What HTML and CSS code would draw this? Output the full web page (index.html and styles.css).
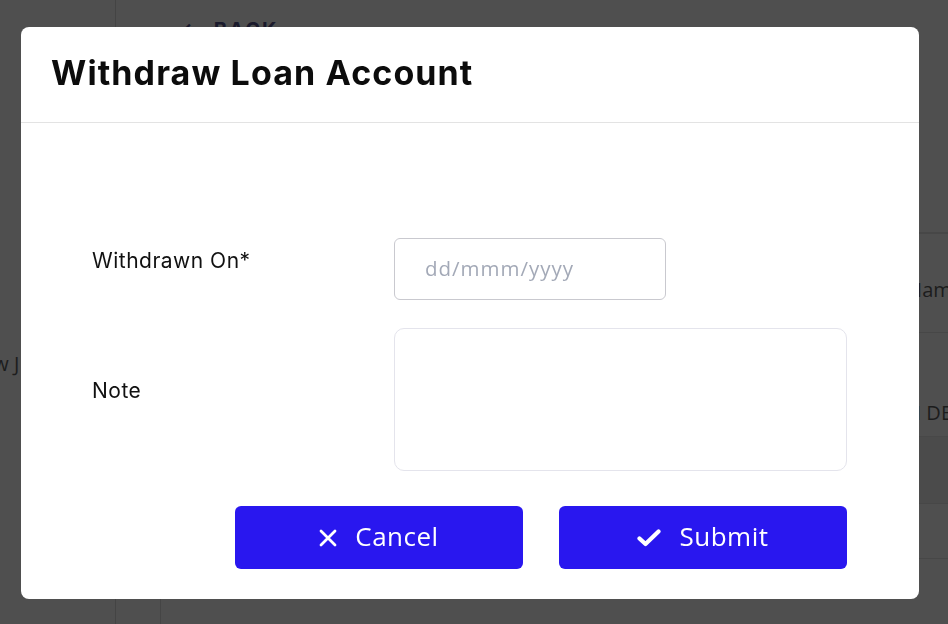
FILE: index.html
```html
<!DOCTYPE html>
<html lang="en">
<head>
<meta charset="utf-8">
<title>Withdraw Loan Account</title>
<link rel="stylesheet" href="styles.css">
</head>
<body>
<div class="page">
  <aside class="sidebar">
    <div class="side-item">New J</div>
  </aside>
  <main class="main">
    <div class="back"><span class="arrow">&#8592;</span> BACK</div>
    <div class="panel">
      <div class="row"></div>
      <div class="row r2"><span class="cell-text">Name</span></div>
      <div class="row r3"><span class="cell-text caps">LOAN DE</span></div>
      <div class="row band"></div>
      <div class="row r5"></div>
      <div class="row r6"></div>
    </div>
  </main>
</div>

<div class="overlay">
  <div class="modal" role="dialog" aria-labelledby="mtitle">
    <header class="modal-header">
      <h1 id="mtitle" class="modal-title">Withdraw Loan Account</h1>
    </header>
    <form class="modal-body">
      <div class="form-grid">
        <label class="field-label" for="withdrawn">Withdrawn On*</label>
        <div class="field"><input id="withdrawn" class="date-input" type="text" placeholder="dd/mmm/yyyy"></div>
        <label class="field-label" for="note">Note</label>
        <div class="field"><textarea id="note" class="note-input"></textarea></div>
      </div>
      <div class="actions">
        <button type="button" class="btn">
          <svg class="icon" width="18" height="18" viewBox="0 0 18 18" aria-hidden="true"><path d="M2 2 L16 16 M16 2 L2 16" stroke="#fff" stroke-width="2.8" stroke-linecap="round" fill="none"/></svg>
          <span class="btn-text">Cancel</span>
        </button>
        <button type="button" class="btn">
          <svg class="icon" width="24" height="18" viewBox="0 0 24 18" aria-hidden="true"><path d="M2.5 9.5 L8.5 15 L21.5 2.5" stroke="#fff" stroke-width="4.2" stroke-linecap="round" stroke-linejoin="round" fill="none"/></svg>
          <span class="btn-text">Submit</span>
        </button>
      </div>
    </form>
  </div>
</div>
</body>
</html>
```

FILE: styles.css
```css
* { box-sizing: border-box; }
html, body { margin: 0; padding: 0; }
body {
  width: 948px;
  height: 624px;
  overflow: hidden;
  background: #4f4f4f;
  font-family: Inter, "Liberation Sans", sans-serif;
}

/* background page (dimmed) */
.page {
  display: flex;
  height: 624px;
}
.sidebar {
  width: 116px;
  border-right: 1px solid #444;
  padding-top: 350px;
  color: #1d1d1d;
  font-family: "Open Sans", sans-serif;
  font-size: 20px;
  overflow: hidden;
}
.side-item { white-space: nowrap; margin-left: -33px; }
.main {
  flex: 1;
  padding: 18px 0 0 44px;
  overflow: hidden;
}
.back {
  margin-left: 20px;
  font-size: 20px;
  font-weight: 700;
  color: #1a1a2c;
  letter-spacing: 2px;
}
.arrow { margin-right: 6px; }
.panel {
  margin-top: 190px;
  border-left: 1px solid #454545;
  height: 420px;
}
.row {
  border-top: 1px solid #474747;
  display: flex;
  justify-content: flex-end;
  overflow: hidden;
  white-space: nowrap;
}
.row:nth-child(1) { height: 0; }
.row.r2 { height: 99px; padding-top: 44px; }
.row.r3 { height: 104px; padding-top: 68px; }
.row.band { height: 67px; background: #4b4b4b; border-top-color: #484848; }
.row.r5 { height: 55px; }
.row.r6 { height: 56px; }
.cell-text {
  font-family: "Open Sans", sans-serif;
  font-size: 20px;
  line-height: 24px;
  color: #1c1c1c;
  margin-right: -15px;
}
.cell-text.caps { margin-right: -4px; }

/* modal */
.overlay {
  position: fixed;
  inset: 0;
  padding: 27px 29px 25px 21px;
}
.modal {
  width: 898px;
  height: 572px;
  background: #fff;
  border-radius: 8px;
  display: flex;
  flex-direction: column;
  overflow: hidden;
}
.modal-header {
  height: 96px;
  border-bottom: 1px solid #e3e3e3;
  padding: 0 30px 5px;
  display: flex;
  align-items: center;
}
.modal-title {
  margin: 0;
  font-size: 34px;
  font-weight: 700;
  color: #0c0c0c;
  letter-spacing: 1.1px;
}
.modal-body {
  flex: 1;
  padding: 115px 72px 30px 71px;
  display: flex;
  flex-direction: column;
}
.form-grid {
  display: grid;
  grid-template-columns: 302px 453px;
  row-gap: 28px;
  align-items: center;
}
.field-label {
  font-size: 21px;
  letter-spacing: 0.5px;
  color: #111;
  padding-bottom: 18px;
}
.date-input {
  display: block;
  width: 272px;
  height: 62px;
  border: 1px solid #c9c9cf;
  border-radius: 6px;
  padding: 0 30px 3px;
  font-family: "Open Sans", sans-serif;
  font-size: 20.5px;
  letter-spacing: 1px;
  color: #333;
  outline: none;
}
.date-input::placeholder { color: #a3a9b7; }
.note-input {
  display: block;
  width: 453px;
  height: 143px;
  border: 1px solid #e4e4ec;
  border-radius: 10px;
  resize: none;
  outline: none;
  padding: 10px;
}
.actions {
  margin-top: 35px;
  display: flex;
  justify-content: flex-end;
  gap: 36px;
}
.btn {
  width: 288px;
  height: 63px;
  border: none;
  border-radius: 6px;
  background: #2917ef;
  color: #fff;
  font-family: "Open Sans", sans-serif;
  font-size: 26px;
  letter-spacing: 0.5px;
  display: flex;
  align-items: center;
  justify-content: center;
  gap: 18px;
  padding: 0 0 3px;
  cursor: pointer;
}
.btn-text { line-height: 1; }
.icon { display: block; margin-top: 3px; }
```
